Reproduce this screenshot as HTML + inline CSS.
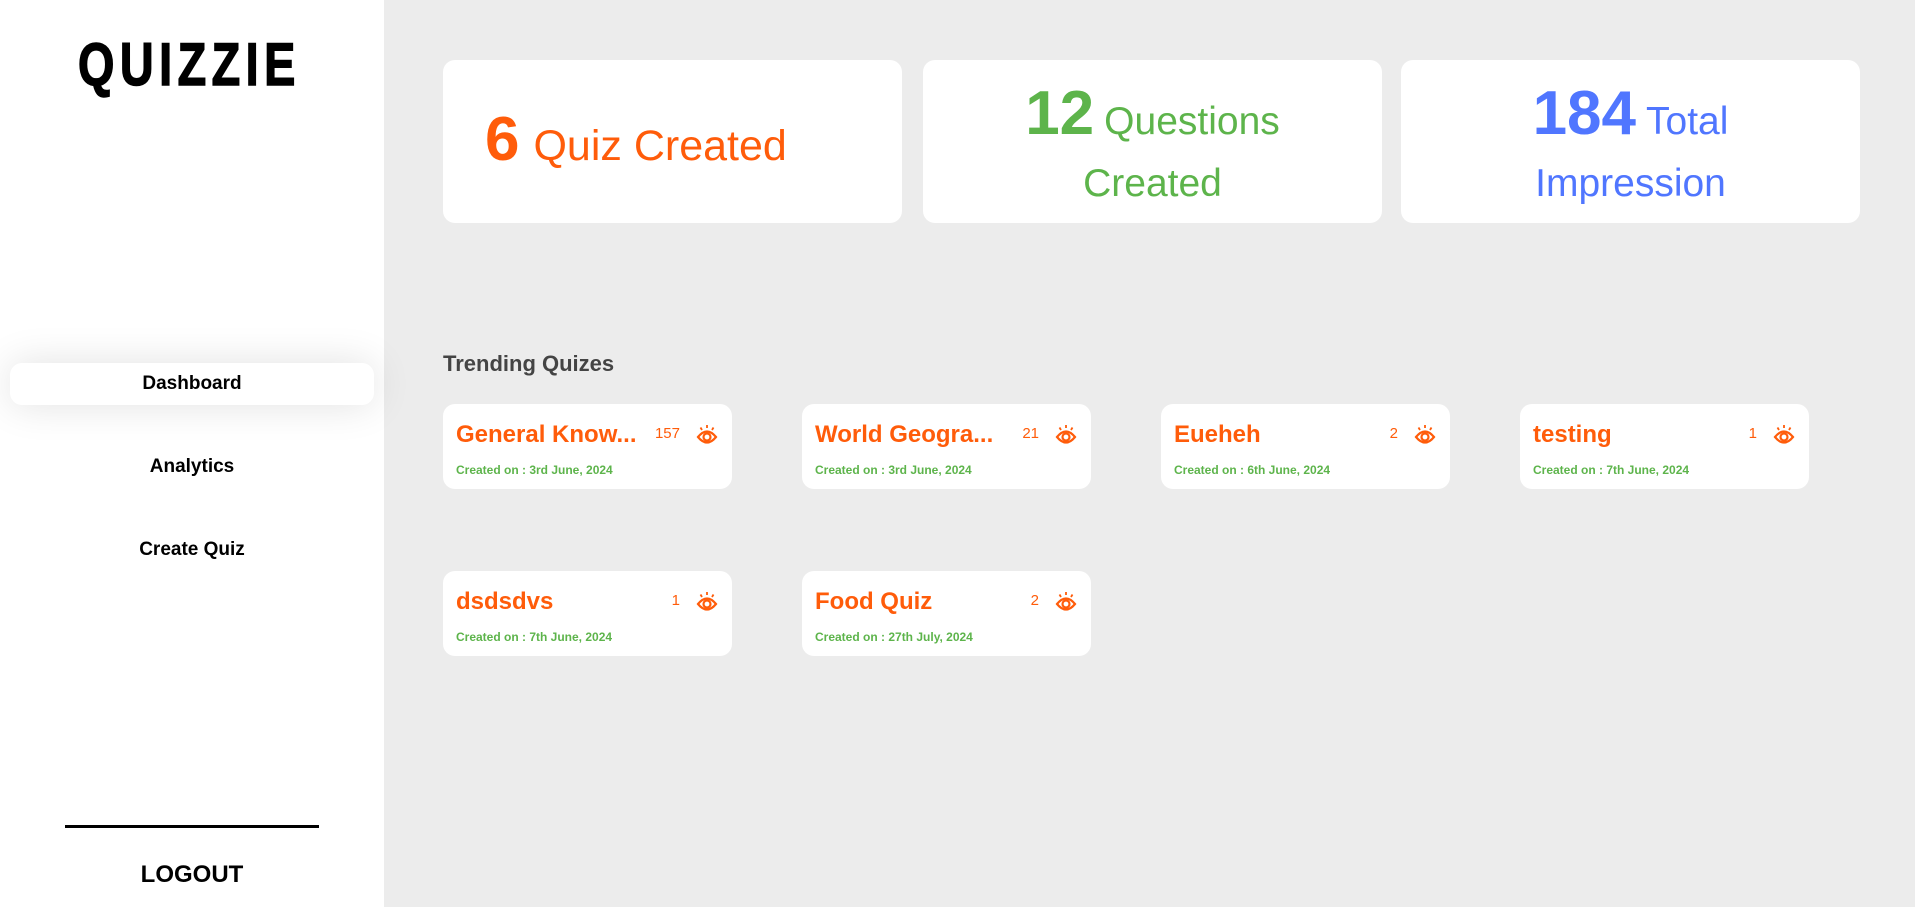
<!DOCTYPE html>
<html><head><meta charset="utf-8"><style>
*{margin:0;padding:0;box-sizing:border-box}
body{width:1915px;height:907px;background:#ececec;font-family:"Liberation Sans",sans-serif;position:relative;overflow:hidden}
.side{position:absolute;left:0;top:0;width:384px;height:907px;background:#fff}
.logo{position:absolute;left:78px;top:30px;font-size:60px;font-weight:bold;letter-spacing:7px;transform:scaleX(0.78);transform-origin:left top;color:#000;width:320px;-webkit-text-stroke:1.5px #000}
.nav{position:absolute;left:0;width:384px;text-align:center;font-weight:bold;font-size:19px;color:#000}
.dash{position:absolute;left:10px;top:363px;width:364px;height:42px;background:#fff;border-radius:12px;box-shadow:0 0 40px rgba(0,0,0,0.12)}
.line{position:absolute;left:65px;top:825px;width:254px;height:3px;background:#000}
.card{position:absolute;top:60px;width:459px;height:163px;background:#fff;border-radius:12px}
.big{font-weight:bold;font-size:62px}
.qc{position:absolute;width:289px;height:85px;background:#fff;border-radius:12px}
.qt{position:absolute;left:13px;top:17px;font-size:24px;font-weight:bold;color:#ff5c0a;white-space:nowrap}
.qd{position:absolute;left:13px;top:59px;font-size:12px;font-weight:bold;color:#5db44b}
.cnt{position:absolute;right:52px;top:21px;font-size:15px;color:#ff5c0a}
.eye{position:absolute;right:14px;top:20px}
</style></head><body>
<div class="side">
<div class="logo">QUIZZIE</div>
<div class="dash"></div>
<div class="nav" style="top:373px">Dashboard</div>
<div class="nav" style="top:456px">Analytics</div>
<div class="nav" style="top:539px">Create Quiz</div>
<div class="line"></div>
<div class="nav" style="top:861px;font-size:24px">LOGOUT</div>
</div>

<div class="card" style="left:443px;color:#ff5c0a">
<div style="position:absolute;left:42px;top:44px;white-space:nowrap"><span class="big">6</span><span style="font-size:43px;margin-left:14px">Quiz Created</span></div>
</div>
<div class="card" style="left:923px;color:#5db44b;text-align:center">
<div style="position:absolute;left:0;right:0;top:18px;white-space:nowrap"><span class="big">12</span><span style="font-size:39px;margin-left:10px">Questions</span></div>
<div style="position:absolute;left:0;right:0;top:102px;font-size:39px">Created</div>
</div>
<div class="card" style="left:1401px;color:#5076ff;text-align:center">
<div style="position:absolute;left:0;right:0;top:18px;white-space:nowrap"><span class="big">184</span><span style="font-size:39px;margin-left:10px">Total</span></div>
<div style="position:absolute;left:0;right:0;top:102px;font-size:39px">Impression</div>
</div>

<div style="position:absolute;left:443px;top:351px;font-size:22px;font-weight:bold;color:#444">Trending Quizes</div>

<svg width="0" height="0" style="position:absolute"><defs><g id="eye"><path d="M2 13 Q11 2 20 13 Q11 24 2 13Z" fill="none" stroke="#ff5c0a" stroke-width="2.2"/><circle cx="11" cy="13" r="3.5" fill="none" stroke="#ff5c0a" stroke-width="2.2"/><path d="M11 4V1M6 6L4.5 3.5M16 6L17.5 3.5" stroke="#ff5c0a" stroke-width="1.8"/></g></defs></svg>

<div class="qc" style="left:443px;top:404px"><div class="qt">General Know...</div><div class="cnt">157</div><svg class="eye" width="22" height="24"><use href="#eye"/></svg><div class="qd">Created on : 3rd June, 2024</div></div>
<div class="qc" style="left:802px;top:404px"><div class="qt">World Geogra...</div><div class="cnt">21</div><svg class="eye" width="22" height="24"><use href="#eye"/></svg><div class="qd">Created on : 3rd June, 2024</div></div>
<div class="qc" style="left:1161px;top:404px"><div class="qt">Eueheh</div><div class="cnt">2</div><svg class="eye" width="22" height="24"><use href="#eye"/></svg><div class="qd">Created on : 6th June, 2024</div></div>
<div class="qc" style="left:1520px;top:404px"><div class="qt">testing</div><div class="cnt">1</div><svg class="eye" width="22" height="24"><use href="#eye"/></svg><div class="qd">Created on : 7th June, 2024</div></div>
<div class="qc" style="left:443px;top:571px"><div class="qt">dsdsdvs</div><div class="cnt">1</div><svg class="eye" width="22" height="24"><use href="#eye"/></svg><div class="qd">Created on : 7th June, 2024</div></div>
<div class="qc" style="left:802px;top:571px"><div class="qt">Food Quiz</div><div class="cnt">2</div><svg class="eye" width="22" height="24"><use href="#eye"/></svg><div class="qd">Created on : 27th July, 2024</div></div>
</body></html>
